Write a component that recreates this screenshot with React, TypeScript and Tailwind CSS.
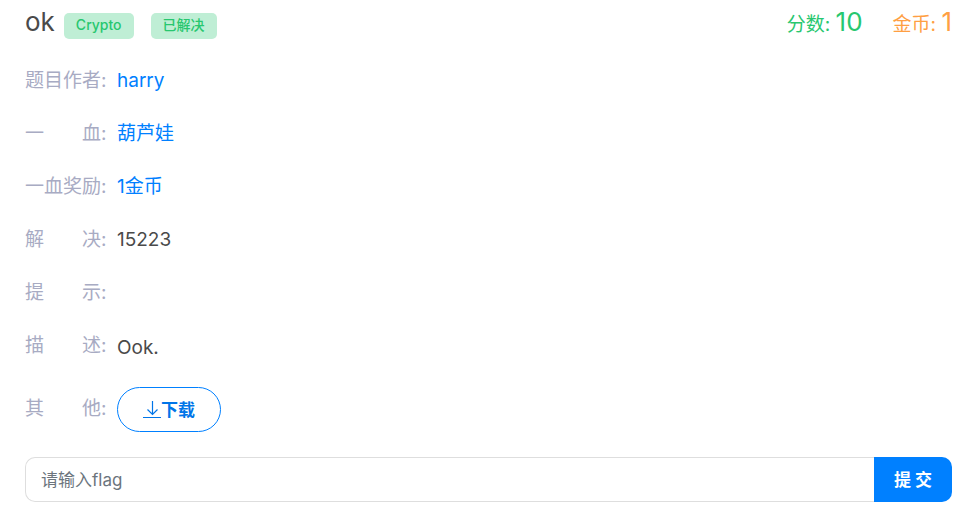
import type { ReactNode } from 'react';

function Row({ label, children }: { label: string; children?: ReactNode }) {
  return (
    <div className="flex items-start">
      <dt className="w-[92px] shrink-0 whitespace-pre text-[#a8abc3]">{label}</dt>
      <dd>{children}</dd>
    </div>
  );
}

function Badge({ children }: { children: ReactNode }) {
  return (
    <span className="rounded-[5px] bg-[#bfeed5] px-3 pb-0.5 text-sm leading-6 font-medium text-[#28c76f]">
      {children}
    </span>
  );
}

function DownloadIcon() {
  return (
    <svg
      className="h-[18px] w-[18px]"
      viewBox="0 0 18 18"
      fill="none"
      stroke="currentColor"
      strokeWidth="1.2"
      aria-hidden="true"
    >
      <path d="M9.5 0v13M4.5 8.5l5 5 5-5M0 16.5h18" />
    </svg>
  );
}

export default function App() {
  return (
    <main className="bg-white pr-4 pl-[25px] font-['Inter','Noto_Sans_CJK_SC',sans-serif] text-[19px] leading-7 text-[#4a4a4a]">
      <header className="flex h-[42px] items-start justify-between">
        <div className="flex items-start">
          <h1 className="pt-[5px] text-[26px] leading-[34px]">ok</h1>
          <div className="flex gap-[17px] pt-[13px] pl-[9px]">
            <Badge>Crypto</Badge>
            <Badge>已解决</Badge>
          </div>
        </div>
        <div className="flex gap-[30px] pt-[5px] leading-[34px]">
          <span className="text-[#28c76f]">
            分数: <span className="text-[26px]">10</span>
          </span>
          <span className="text-[#ff9f43]">
            金币: <span className="text-[26px]">1</span>
          </span>
        </div>
      </header>

      <dl className="flex flex-col gap-[25px] pt-[25px]">
        <Row label="题目作者:">
          <a href="#author" className="text-[#0080ff]">harry</a>
        </Row>
        <Row label="一　　血:">
          <a href="#first-blood" className="text-[#0080ff]">葫芦娃</a>
        </Row>
        <Row label="一血奖励:">
          <span className="text-[#0080ff]">1金币</span>
        </Row>
        <Row label="解　　决:">15223</Row>
        <Row label="提　　示:" />
        <Row label="描　　述:">
          <p className="pt-0.5">Ook.</p>
        </Row>
        <div className="flex items-start">
          <dt className="w-[92px] shrink-0 pt-2 whitespace-pre text-[#a8abc3]">其　　他:</dt>
          <dd>
            <button
              type="button"
              className="flex h-[45px] items-center rounded-full border border-[#0080ff] px-[25px] text-[17px] font-bold text-[#0075e8]"
            >
              <DownloadIcon />
              下载
            </button>
          </dd>
        </div>
      </dl>

      <form className="flex pt-[25px]" onSubmit={(event) => event.preventDefault()}>
        <input
          type="text"
          aria-label="flag"
          placeholder="请输入flag"
          className="h-[45px] min-w-0 flex-1 rounded-l-[10px] border border-r-0 border-[#dedede] px-[15px] text-[17px] outline-none placeholder:text-[#6c757d]"
        />
        <button
          type="submit"
          className="h-[45px] w-[78px] rounded-r-[10px] bg-[#0080ff] text-[17px] font-bold text-white"
        >
          提 交
        </button>
      </form>
    </main>
  );
}
